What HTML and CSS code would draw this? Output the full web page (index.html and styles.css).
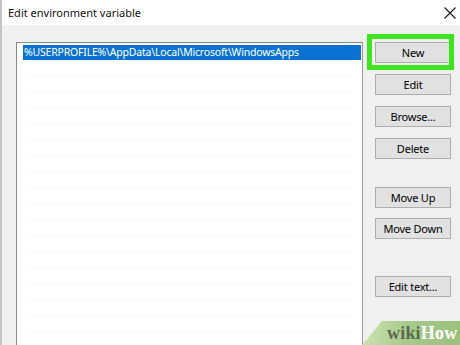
FILE: index.html
```
<!DOCTYPE html>
<html lang="en">
<head>
    <meta charset="UTF-8">
    <title>Edit environment variable</title>
    <link rel="stylesheet" href="styles.css">
</head>
<body>
    <div class="window">
        <header class="titlebar">
            <span class="title">Edit environment variable</span>
            <svg class="close" width="12" height="12" viewBox="0 0 12 12">
                <path d="M0.5 0.5 L11.5 11.5 M11.5 0.5 L0.5 11.5" stroke="#1a1a1a" stroke-width="1.1" fill="none"/>
            </svg>
        </header>

        <main class="content">
            <ul class="path-list">
                <li class="row selected">%USERPROFILE%\AppData\Local\Microsoft\WindowsApps</li>
                <li class="row"></li>
                <li class="row"></li>
                <li class="row"></li>
                <li class="row"></li>
                <li class="row"></li>
                <li class="row"></li>
                <li class="row"></li>
                <li class="row"></li>
                <li class="row"></li>
                <li class="row"></li>
                <li class="row"></li>
                <li class="row"></li>
                <li class="row"></li>
                <li class="row"></li>
                <li class="row"></li>
                <li class="row"></li>
                <li class="row"></li>
            </ul>

            <div class="actions">
                <div class="highlight-wrap">
                    <button class="btn">New</button>
                    <span class="highlight"></span>
                </div>
                <button class="btn">Edit</button>
                <button class="btn">Browse...</button>
                <button class="btn">Delete</button>
                <button class="btn group-start">Move Up</button>
                <button class="btn">Move Down</button>
                <button class="btn text-start">Edit text...</button>
            </div>
        </main>

        <div class="badge"><span class="wiki">wiki</span><span class="how">How</span></div>
    </div>
</body>
</html>
```

FILE: styles.css
```
* {
    margin: 0;
    padding: 0;
    box-sizing: border-box;
}

body {
    width: 460px;
    height: 345px;
    overflow: hidden;
    font-family: 'Noto Sans', 'Open Sans', sans-serif;
    font-size: 11px;
    color: #000;
    background: #f0f0f0;
}

.window {
    position: relative;
    height: 345px;
    border-left: 2px solid #c4c4c4;
    background: #f0f0f0;
    overflow: hidden;
}

.titlebar {
    height: 25px;
    background: #fff;
    display: flex;
    align-items: center;
    justify-content: space-between;
    padding: 0 4px 1px 6px;
}

.title {
    font-size: 11px;
    color: #111;
}

.close {
    margin-top: 2px;
}

.content {
    display: flex;
    align-items: flex-start;
    padding: 17px 0 0 14px;
}

.path-list {
    list-style: none;
    width: 347px;
    height: 320px;
    border: 1px solid #8a8a8a;
    border-right-color: #9a9a9a;
    background: #fff;
    padding: 1px 1px 0 6px;
}

.row {
    height: 16px;
    line-height: 15px;
    border-bottom: 1px solid #f7f7f7;
    margin-right: 8px;
    margin-left: 6px;
    white-space: nowrap;
}

.row.selected {
    background: #0a73d2;
    color: #fff;
    font-size: 10.5px;
    letter-spacing: -0.2px;
    padding-left: 1px;
    margin: 1px 0 0 0;
    height: 15px;
    border-bottom: none;
}

.actions {
    display: flex;
    flex-direction: column;
    gap: 11px;
    margin-left: 12px;
    width: 76px;
}

.btn {
    width: 76px;
    height: 21px;
    font-family: inherit;
    font-size: 11px;
    letter-spacing: -0.2px;
    color: #000;
    background: #e1e1e1;
    border: 1px solid #adadad;
}

.group-start {
    margin-top: 17px;
}

.btn.group-start + .btn {
    margin-top: -1px;
}

.text-start {
    margin-top: 26px;
}

.highlight-wrap {
    position: relative;
    height: 21px;
}

.highlight {
    position: absolute;
    left: -8px;
    right: -3px;
    top: -8px;
    bottom: -7px;
    border: 5px solid #3ee41f;
}

.badge {
    position: absolute;
    right: 0;
    bottom: 0;
    width: 98px;
    height: 24px;
    clip-path: polygon(20px 0, 100% 0, 100% 100%, 0 100%);
    background: linear-gradient(100deg, #cfe3b6 0%, #a8c98a 45%, #9cc07c 100%);
    font-family: 'Liberation Serif', 'DejaVu Serif', serif;
    font-weight: bold;
    font-size: 18px;
    line-height: 24px;
    padding-left: 25px;
    letter-spacing: 0.2px;
    white-space: nowrap;
}

.wiki {
    color: #5b6a4e;
}

.how {
    color: #fff;
}
```
